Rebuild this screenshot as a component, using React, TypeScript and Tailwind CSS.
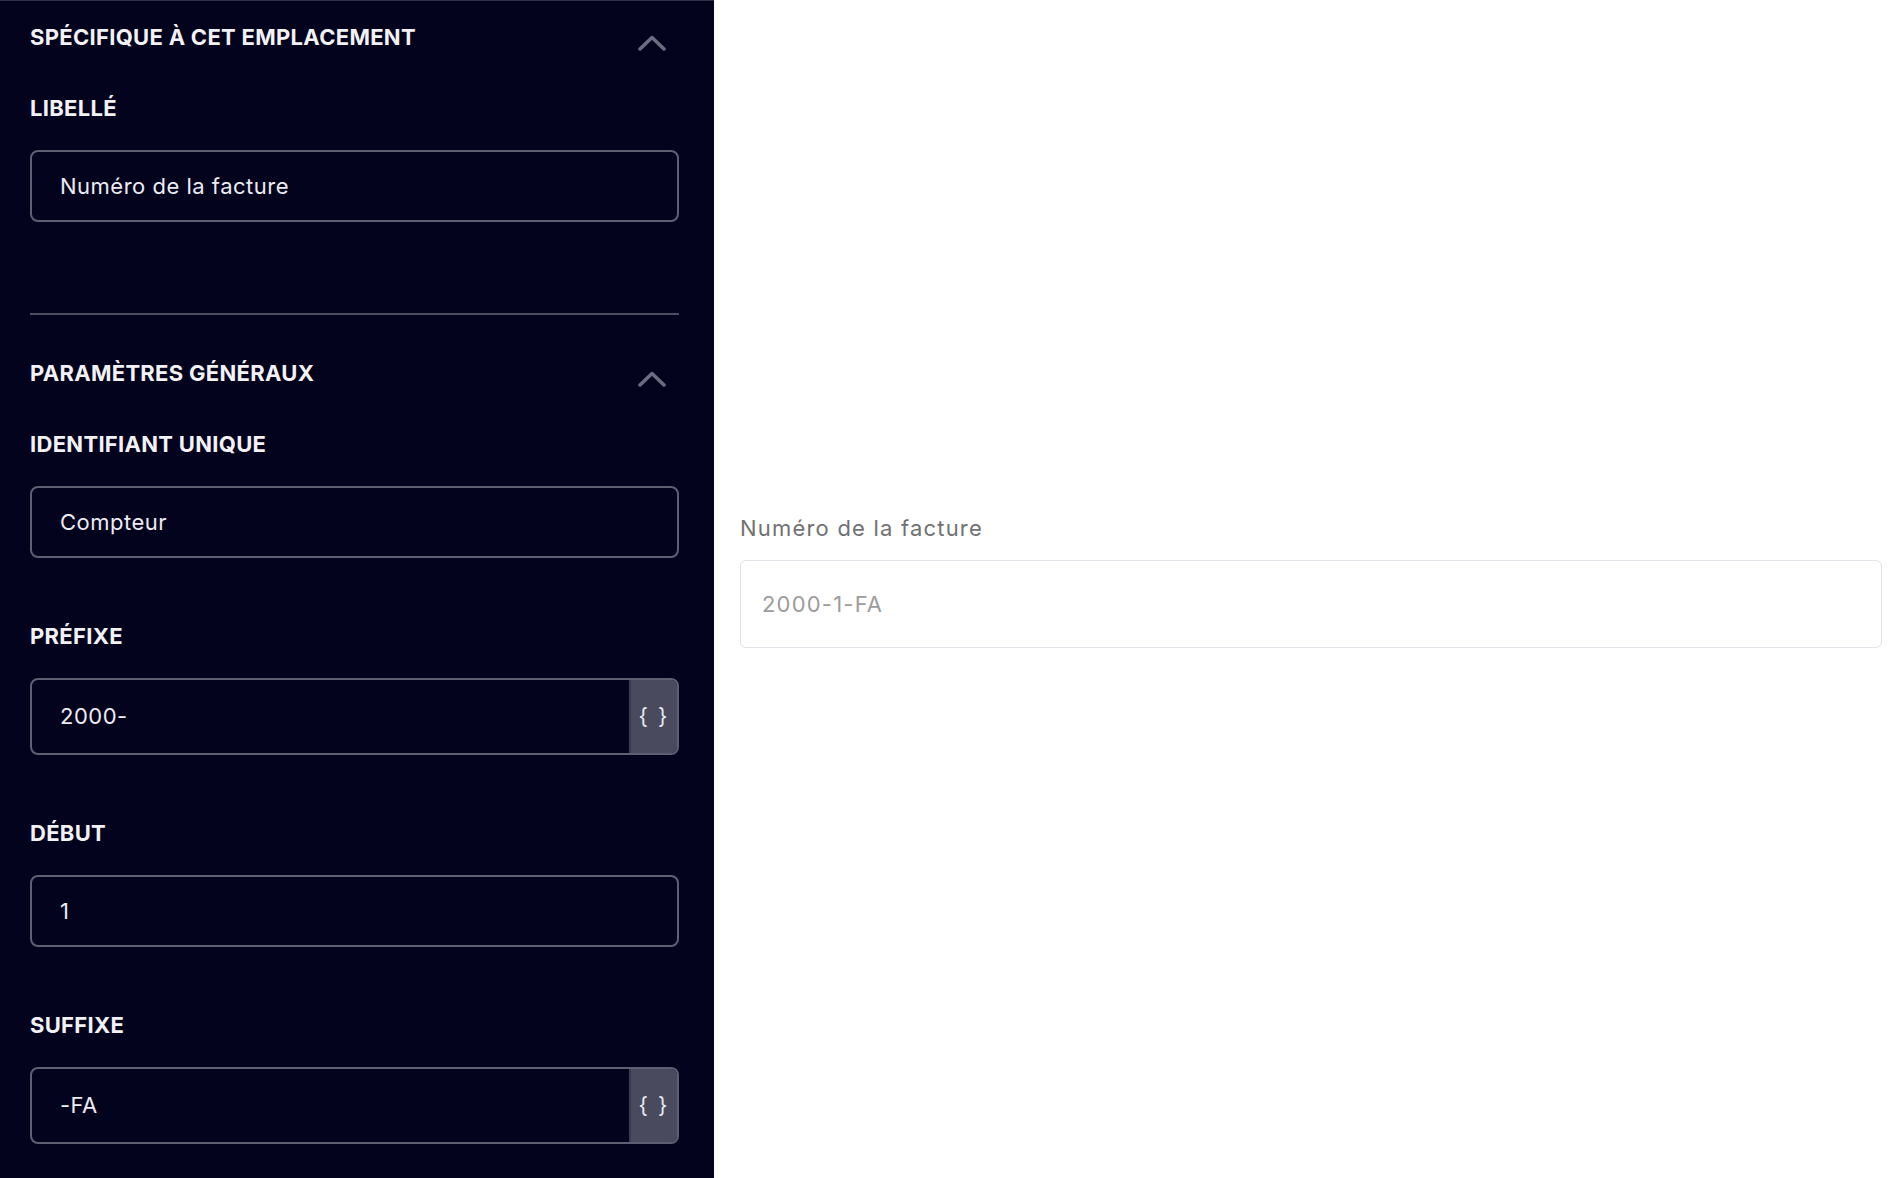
import { ReactNode } from 'react'

const font = { fontFamily: 'Inter, "Noto Sans", sans-serif' }

function Chevron() {
  return (
    <svg width="28" height="16" viewBox="0 0 28 16" fill="none" className="mt-[12px] mr-[13px] shrink-0">
      <path d="M2 14 L14 2.5 L26 14" stroke="#6c6c82" strokeWidth="3.5" strokeLinecap="round" strokeLinejoin="round" />
    </svg>
  )
}

function SectionHeader({ title }: { title: string }) {
  return (
    <div className="flex items-start justify-between">
      <h2 className="text-[22px] leading-[28px] font-bold tracking-[0.3px] text-[#f2f2f6] uppercase">{title}</h2>
      <Chevron />
    </div>
  )
}

function Field({ label, value, vars = false, className = '' }: { label: string; value: string; vars?: boolean; className?: string }) {
  return (
    <div className={className}>
      <div className="text-[22px] leading-[28px] font-bold tracking-[0.3px] text-[#f2f2f6] uppercase">{label}</div>
      <div
        className={`mt-[28px] flex border-2 border-[#5f5f74] rounded-[8px] overflow-hidden ${
          vars ? 'h-[77px]' : 'h-[72px]'
        }`}
      >
        <div className="flex-1 flex items-center pl-[28px] text-[22px] tracking-[0.5px] text-[#ececf2]">{value}</div>
        {vars && (
          <button className="w-[48px] bg-[#4a4a5f] border-l-2 border-[#3c3c50] flex items-center justify-center text-[22px] text-[#e6e6ee] tracking-[2px]">
            {'{ }'}
          </button>
        )}
      </div>
    </div>
  )
}

function Section({ children }: { children: ReactNode }) {
  return <section>{children}</section>
}

export default function App() {
  return (
    <div className="flex h-screen bg-white" style={font}>
      <aside className="w-[714px] shrink-0 bg-[#03031d] border-t border-[#30304a] pt-[22px] pl-[30px]">
        <div className="w-[649px]">
          <Section>
            <SectionHeader title="Spécifique à cet emplacement" />
            <Field className="mt-[43px]" label="Libellé" value="Numéro de la facture" />
          </Section>

          <div className="mt-[91px] h-[2px] bg-[#4d4d60]" />

          <Section>
            <div className="mt-[44px]">
              <SectionHeader title="Paramètres généraux" />
            </div>
            <div className="mt-[43px] flex flex-col gap-[64px]">
              <Field label="Identifiant unique" value="Compteur" />
              <Field label="Préfixe" value="2000-" vars />
              <Field label="Début" value="1" />
              <Field label="Suffixe" value="-FA" vars />
            </div>
          </Section>
        </div>
      </aside>

      <main className="flex-1 pt-[514px] pl-[26px] pr-[16px]">
        <label className="block text-[22px] leading-[28px] tracking-[1.2px] text-[#717171]">Numéro de la facture</label>
        <div className="mt-[18px] h-[88px] border-[1.5px] border-[#e0e4e9] rounded-[6px] flex items-center pl-[21px] text-[22px] tracking-[1.2px] text-[#9c9c9c]">
          2000-1-FA
        </div>
      </main>
    </div>
  )
}
